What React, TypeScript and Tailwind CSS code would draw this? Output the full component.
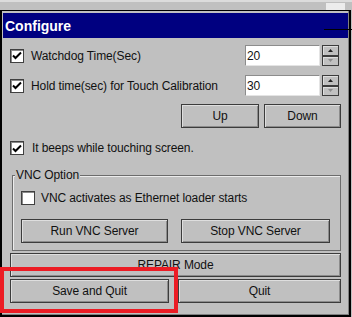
import React from "react";

const Check = ({ checked }: { checked?: boolean }) => (
  <span className="w-[14px] h-[14px] shrink-0 bg-white border border-[#404040] shadow-[inset_1px_1px_0_#8a8a8a] flex items-center justify-center">
    {checked && (
      <svg width="10" height="9" viewBox="0 0 10 9">
        <path d="M1 4.5 L3.5 7 L9 1.5" stroke="#000" strokeWidth="2" fill="none" />
      </svg>
    )}
  </span>
);

const Btn = ({ label, className = "" }: { label: string; className?: string }) => (
  <div
    className={`h-[24px] flex items-center justify-center bg-[#c0c0c0] border border-[#3c3c3c] shadow-[inset_1px_1px_0_#dedede,inset_-1px_-1px_0_#8c8c8c] ${className}`}
  >
    {label}
  </div>
);

const SpinHalf = ({ up }: { up?: boolean }) => (
  <div className="flex-1 flex items-center justify-center bg-[#c0c0c0] border border-[#3c3c3c] shadow-[inset_1px_1px_0_#dedede]">
    <svg width="5" height="3" viewBox="0 0 5 3">
      {up ? (
        <path d="M0 3 L2.5 0 L5 3 Z" fill="#202020" />
      ) : (
        <path d="M0 0 L2.5 3 L5 0 Z" fill="#8c8c8c" />
      )}
    </svg>
  </div>
);

const NumField = ({ value }: { value: string }) => (
  <div className="ml-auto flex h-full gap-[2px] pr-[2px]">
    <div className="w-[75px] bg-white border border-[#8c8c8c] border-b-[#e4e4e4] border-r-[#e4e4e4] flex items-center pl-[1px]">
      {value}
    </div>
    <div className="w-[17px] flex flex-col">
      <SpinHalf up />
      <SpinHalf />
    </div>
  </div>
);

export default function App() {
  return (
    <div className="relative w-[352px] h-[317px] overflow-hidden bg-[#c0c0c0] flex flex-col text-[12px] tracking-[-0.1px] leading-none text-[#111] font-['Liberation_Sans',Arial,sans-serif]">
      {/* parent window strip */}
      <div className="h-[10px] shrink-0 border-t-2 border-[#dcdcdc] relative">
        <div className="absolute left-[326px] top-[1px] w-[19px] h-[7px] bg-[#ececec]" />
      </div>

      {/* dialog */}
      <div className="flex-1 w-[351px] flex flex-col border-t border-l-2 border-r-2 border-b-2 border-black">
        <div className="flex-1 flex flex-col pt-[2px] pl-[1px] border-r border-b border-[#808080]">
          <div className="h-[25px] shrink-0 bg-[#000080] flex items-center pl-[2px] text-white font-bold text-[14px] tracking-normal">
            Configure
          </div>

          <div className="flex flex-col px-[7px]">
            <div className="mt-[7px] h-[21px] flex items-center">
              <Check checked />
              <span className="ml-[7px]">Watchdog Time(Sec)</span>
              <NumField value="20" />
            </div>

            <div className="mt-[9px] h-[21px] flex items-center">
              <Check checked />
              <span className="ml-[7px]">Hold time(sec) for Touch Calibration</span>
              <NumField value="30" />
            </div>

            <div className="mt-[8px] flex justify-end gap-[5px]">
              <Btn label="Up" className="w-[78px]" />
              <Btn label="Down" className="w-[77px]" />
            </div>

            <div className="mt-[13px] h-[14px] flex items-center">
              <Check checked />
              <span className="ml-[8px]">It beeps while touching screen.</span>
            </div>

            {/* VNC group */}
            <div className="relative mt-[20px] ml-[2px] border border-[#6c6c6c] shadow-[inset_1px_1px_0_#ececec] pt-[15px] pl-[8px] pr-[10px] pb-[7px]">
              <span className="absolute left-[2px] top-[-7px] bg-[#c0c0c0] px-px">VNC Option</span>
              <div className="h-[14px] flex items-center">
                <Check />
                <span className="ml-[6px]">VNC activates as Ethernet loader starts</span>
              </div>
              <div className="mt-[14px] flex justify-between">
                <Btn label="Run VNC Server" className="w-[147px]" />
                <Btn label="Stop VNC Server" className="w-[149px]" />
              </div>
            </div>

            <Btn label="REPAIR Mode" className="mt-[2px] w-full" />

            <div className="mt-[2px] flex gap-[9px]">
              <Btn label="Save and Quit" className="w-[159px]" />
              <Btn label="Quit" className="flex-1" />
            </div>
          </div>
        </div>
      </div>

      {/* stray line across the title bar */}
      <div className="absolute left-[324px] top-[29px] w-[28px] h-px bg-black" />

      {/* red highlight */}
      <div className="absolute left-0 top-[267px] w-[178px] h-[46px] border-4 border-[#ec1c24]" />
    </div>
  );
}
